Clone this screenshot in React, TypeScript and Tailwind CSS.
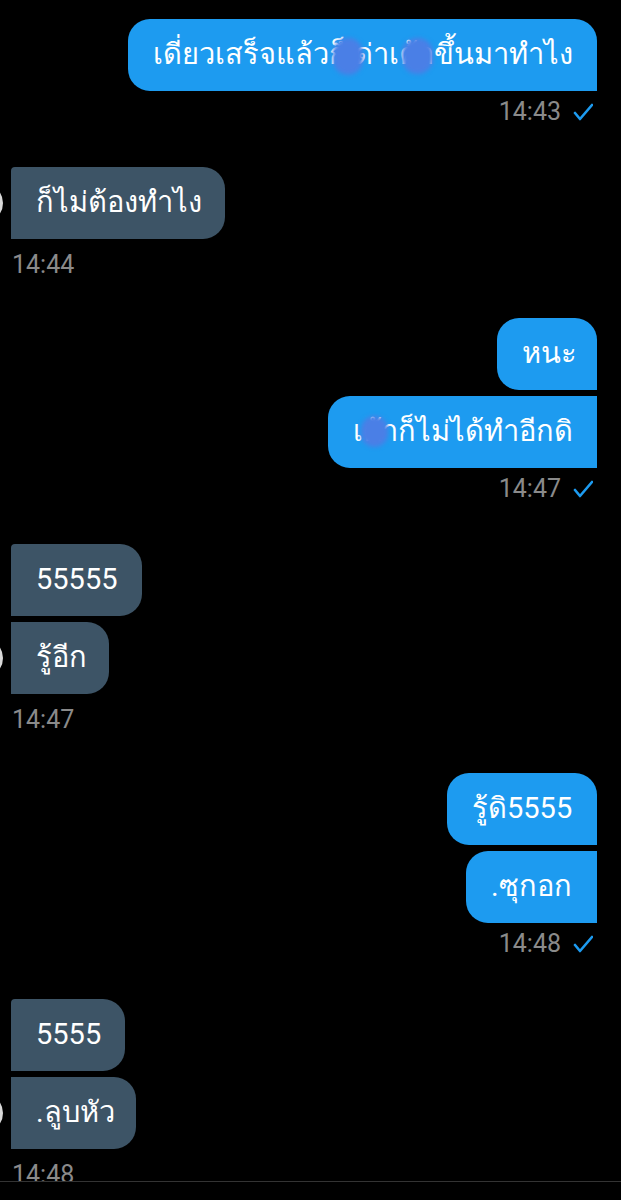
import React from "react"

type Msg = { text: string; w: number; blobs?: { x: number; y: number; w: number; h: number }[] }

const Check = () => (
  <svg width="20" height="20" viewBox="0 0 20 20" fill="none" className="ml-[12px]">
    <polyline points="2,11 7,17 19,3" stroke="#1d9bf0" strokeWidth="2.6" strokeLinecap="round" strokeLinejoin="round" />
  </svg>
)

const Blob = ({ x, y, w, h }: { x: number; y: number; w: number; h: number }) => (
  <div
    className="absolute rounded-full bg-[#4a7fe6] blur-[2px]"
    style={{ left: x, top: y, width: w, height: h }}
  />
)

const SentGroup = ({ msgs, time }: { msgs: Msg[]; time: string }) => (
  <div className="flex flex-col items-end">
    <div className="flex flex-col items-end gap-[6px]">
      {msgs.map((m, i) => (
        <div
          key={i}
          className={`relative h-[72px] flex items-center pl-[25px] bg-[#1d9bf0] text-white text-[29px] whitespace-pre overflow-hidden rounded-l-[22px] ${i === 0 ? "rounded-tr-[22px]" : ""}`}
          style={{ width: m.w }}
        >
          {m.text}
          {m.blobs?.map((b, j) => <Blob key={j} {...b} />)}
        </div>
      ))}
    </div>
    <div className="mt-[6px] h-[30px] flex items-center pr-[4px] text-[25px] text-[#8a8a8a] mb-[40px]">
      {time}
      <Check />
    </div>
  </div>
)

const RecvGroup = ({ msgs, time }: { msgs: Msg[]; time: string }) => (
  <div className="flex flex-col items-start">
    <div className="flex flex-col items-start gap-[6px]">
      {msgs.map((m, i) => (
        <div key={i} className="relative flex items-center">
          {i === msgs.length - 1 && (
            <div className="absolute left-[-48px] top-[16px] w-[40px] h-[40px] rounded-full border-[3px] border-[#d8d8d8]" />
          )}
          <div
            className={`h-[72px] flex items-center pl-[25px] bg-[#3d5466] text-white text-[29px] whitespace-nowrap rounded-r-[22px] ${i === 0 ? "rounded-tl-[4px]" : ""}`}
            style={{ width: m.w }}
          >
            {m.text}
          </div>
        </div>
      ))}
    </div>
    <div className="mt-[11px] h-[30px] flex items-center pl-[1px] text-[25px] text-[#8a8a8a] mb-[38px]">
      {time}
    </div>
  </div>
)

export default function App() {
  return (
    <div
      className="w-[621px] h-[1200px] bg-black flex flex-col overflow-hidden"
      style={{ fontFamily: '"Roboto", "Noto Sans", "DejaVu Sans", sans-serif' }}
    >
      <div className="h-[1181px] overflow-hidden flex flex-col pt-[19px] pl-[11px] pr-[24px]">
        <SentGroup
          time="14:43"
          msgs={[
            {
              text: "เดี่ยวเสร็จแล้วก็ ด่าเค้าขึ้นมาทำไง",
              w: 469,
              blobs: [
                { x: 205, y: 19, w: 30, h: 37 },
                { x: 274, y: 19, w: 31, h: 36 },
              ],
            },
          ]}
        />
        <RecvGroup time="14:44" msgs={[{ text: "ก็ไม่ต้องทำไง", w: 214 }]} />
        <SentGroup
          time="14:47"
          msgs={[
            { text: "หนะ", w: 100 },
            { text: "เค้าก็ไม่ได้ทำอีกดิ", w: 269, blobs: [{ x: 33, y: 20, w: 27, h: 31 }] },
          ]}
        />
        <RecvGroup
          time="14:47"
          msgs={[
            { text: "55555", w: 131 },
            { text: "รู้อีก", w: 98 },
          ]}
        />
        <SentGroup
          time="14:48"
          msgs={[
            { text: "รู้ดิ5555", w: 150 },
            { text: ".ซุกอก", w: 131 },
          ]}
        />
        <RecvGroup
          time="14:48"
          msgs={[
            { text: "5555", w: 114 },
            { text: ".ลูบหัว", w: 125 },
          ]}
        />
      </div>
      <div className="flex-1 border-t border-[#333333]" />
    </div>
  )
}
